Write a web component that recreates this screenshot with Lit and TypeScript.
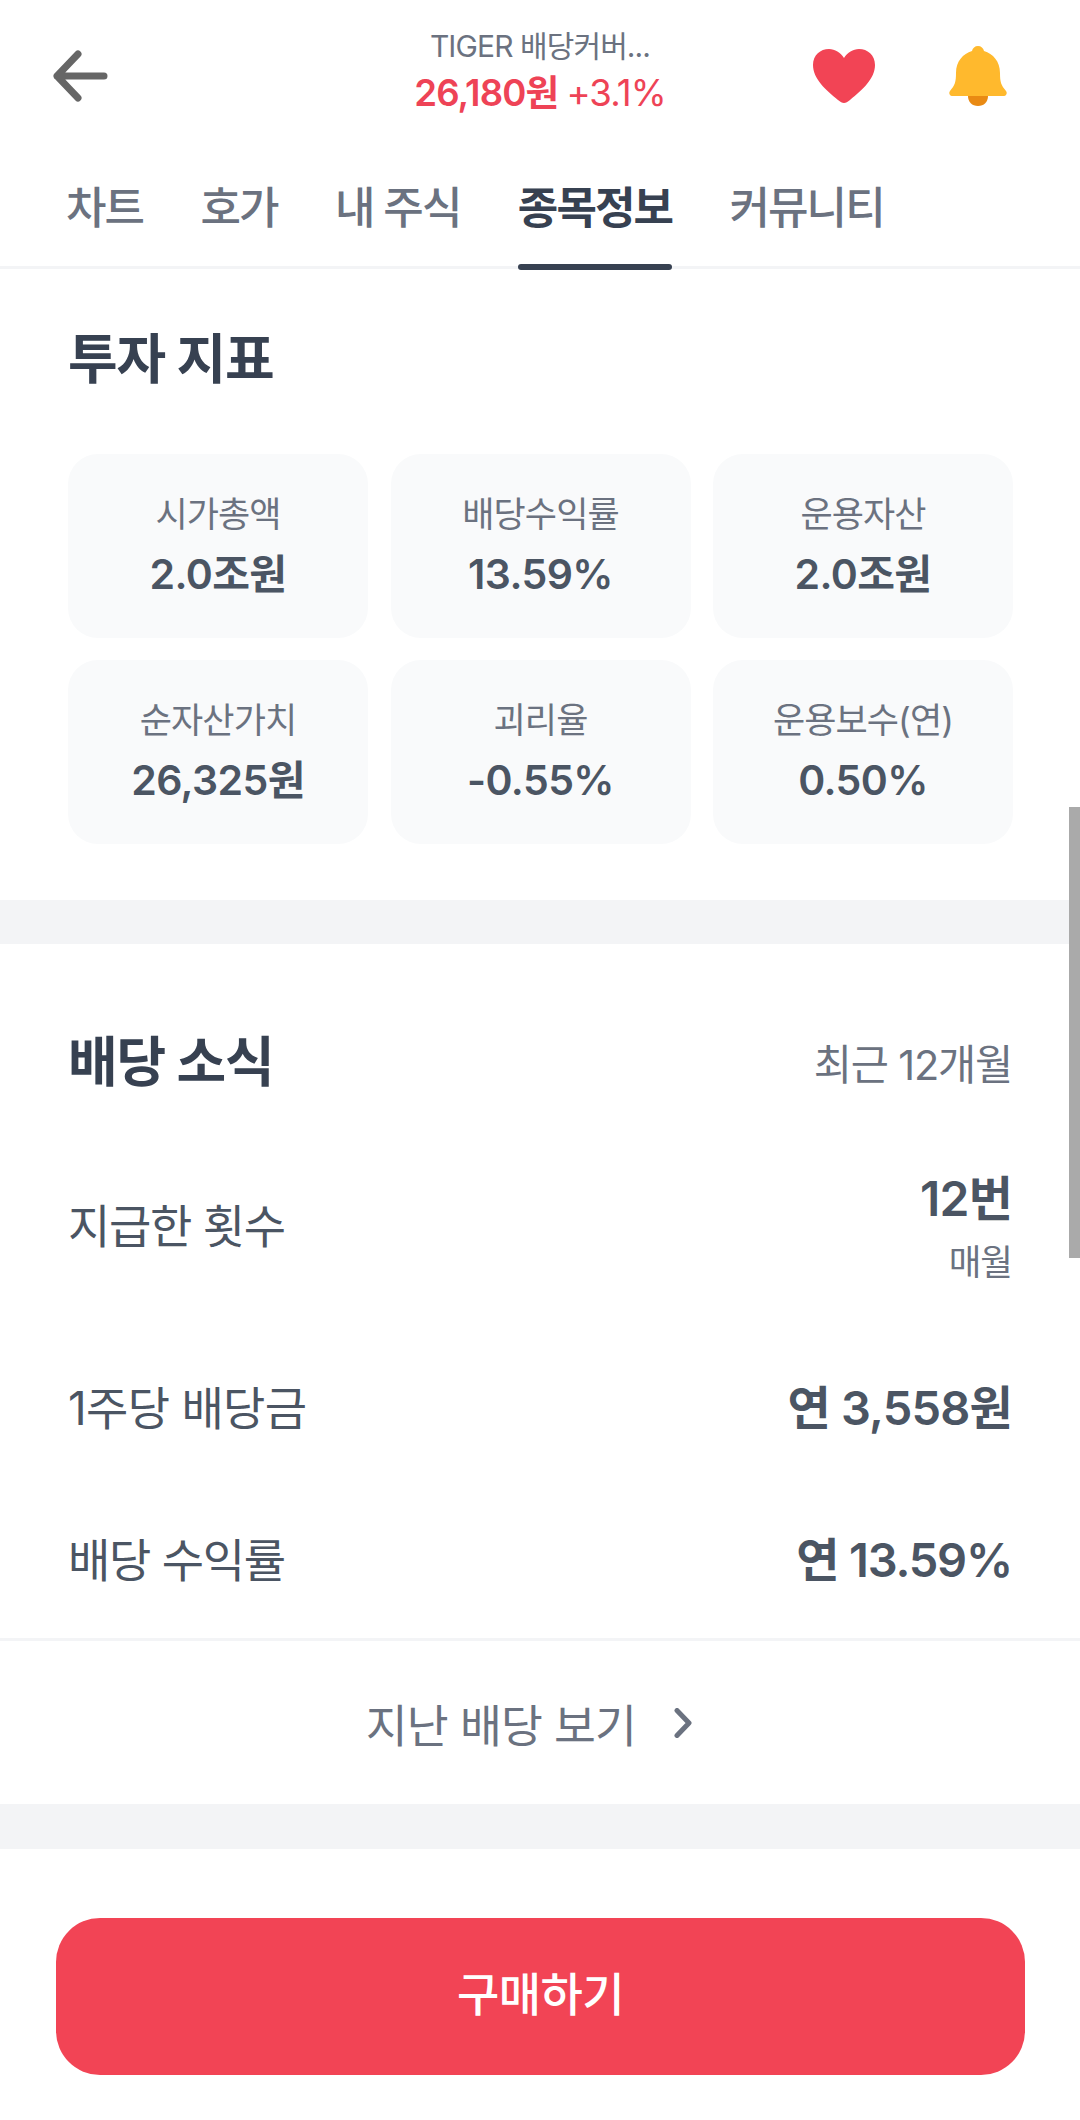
import { LitElement, html, css } from "lit";
import { customElement } from "lit/decorators.js";

const cards = [
  ["시가총액", "2.0조원"],
  ["배당수익률", "13.59%"],
  ["운용자산", "2.0조원"],
  ["순자산가치", "26,325원"],
  ["괴리율", "-0.55%"],
  ["운용보수(연)", "0.50%"],
];

@customElement("app-root")
export class AppRoot extends LitElement {
  static styles = css`
    :host {
      display: block;
      position: relative;
      width: 1080px;
      height: 2120px;
      overflow: hidden;
      background: #fff;
      font-family: "Inter", "Noto Sans CJK KR", sans-serif;
      color: #4b5563;
    }
    * { box-sizing: border-box; }
    .header {
      height: 132px;
      padding: 20px 73px 0 73px;
      display: grid;
      grid-template-columns: 1fr auto 1fr;
      align-items: center;
    }
    .header svg { display: block; }
    .back { margin-left: -23px; }
    .icons { display: flex; justify-content: flex-end; align-items: center; gap: 73px; }
    .name { text-align: center; font-size: 30px; line-height: 40px; color: #6b7280; letter-spacing: -0.9px; }
    .price { text-align: center; font-size: 36.6px; line-height: 48px; margin-top: 3px; color: #ee4356; font-weight: 600; letter-spacing: -0.9px; }
    .price span { font-weight: 400; }
    .titlebox { align-self: start; padding-top: 6px; }
    .tabs {
      height: 137px;
      margin-bottom: -1px;
      padding: 0 66px;
      display: flex;
      gap: 57.300px;
      border-bottom: 3px solid #f3f4f6;
    }
    .tab {
      position: relative;
      height: 137px;
      font-size: 44px;
      line-height: 152px;
      font-weight: 500;
      color: #6b7280;
      letter-spacing: -1.9px;
    }
    .tab.on { color: #374151; font-weight: 700; }
    .tab.on::after {
      content: "";
      position: absolute;
      left: 0; right: 0; bottom: -1px;
      height: 6px;
      border-radius: 3px;
      background: #374151;
    }
    .sec1 { padding: 0 68px; height: 632px; }
    h2 { margin: 0; font-size: 54px; font-weight: 700; color: #374151; letter-spacing: -1.2px; }
    .sec1 h2 { line-height: 68px; padding-top: 58px; height: 186px; }
    .grid { display: grid; grid-template-columns: repeat(3, 300px); gap: 22px 22.5px; }
    .card {
      height: 184px;
      background: #f9fafb;
      border-radius: 30px;
      text-align: center;
      padding-top: 36px;
    }
    .card .k { font-size: 35px; line-height: 48px; color: #6b7280; letter-spacing: -0.9px; }
    .card .v { font-size: 41px; line-height: 54px; margin-top: 9px; font-weight: 600; color: #4b5563; letter-spacing: -0.6px; }
    .band { height: 45px; background: #f3f4f6; }
    .band.one { height: 44px; }
    .sec2 { height: 694px; padding: 84px 68px 0; }
    .head { display: flex; justify-content: space-between; align-items: center; height: 70px; }
    .head h2 { line-height: 68px; }
    .head .side { font-size: 41.500px; color: #6b7280; letter-spacing: -1.2px; margin-top: -2px; }
    .row { display: flex; justify-content: space-between; align-items: center; font-size: 46px; color: #4b5563; letter-spacing: -1.3px; }
    .row .l { line-height: 60px; }
    .row .r { font-weight: 600; font-size: 47px; text-align: right; line-height: 60px; letter-spacing: -0.8px; }
    .row.a { height: 136px; margin-top: 60px; }
    .row.a .r { font-size: 48px; padding-top: 14px; }
    .row.b { height: 60px; margin-top: 84px; letter-spacing: -0.7px; }
    .row.c { height: 60px; margin-top: 92px; }
    .row.c .r { letter-spacing: -1.2px; }
    .sub { font-size: 35.5px; font-weight: 400; color: #6b7280; line-height: 68px; letter-spacing: -1px; }
    .line { height: 3px; background: #f3f4f6; }
    .more {
      height: 163px;
      display: flex;
      justify-content: center;
      align-items: center;
      gap: 38px;
      font-size: 45.5px;
      color: #6b7280;
      letter-spacing: -0.8px;
      padding-right: 22px;
    }
    .foot { height: 271px; padding: 69px 55px 0 56px; }
    .buy {
      height: 157px;
      padding-bottom: 12px;
      border-radius: 44px;
      background: #f24455;
      color: #fff;
      font-size: 46px;
      font-weight: 500;
      letter-spacing: -0.6px;
      display: flex;
      align-items: center;
      justify-content: center;
    }
    .thumb { position: absolute; right: 0; top: 807px; width: 11px; height: 451px; background: #aaa; }
  `;

  render() {
    return html`
      <div class="header">
        <svg class="back" width="64" height="60" viewBox="0 0 64 60">
          <path d="M7 30H54M28 8L7 30L28 52" fill="none" stroke="#666" stroke-width="7" stroke-linecap="round" stroke-linejoin="round"/>
        </svg>
        <div class="titlebox">
          <div class="name">TIGER 배당커버...</div>
          <div class="price">26,180원 <span>+3.1%</span></div>
        </div>
        <div class="icons">
          <svg width="64" height="56" viewBox="0 0 64 56">
            <path d="M32 55C30 55 28.500 54 26 52C14 42 1 31 1 17C1 7 8.500 1 17 1C23 1 28.500 4.500 32 10C35.500 4.500 41 1 47 1C55.500 1 63 7 63 17C63 31 50 42 38 52C35.500 54 34 55 32 55Z" fill="#f24455"/>
          </svg>
          <svg width="58" height="60" viewBox="0 0 58 60">
            <path d="M19 50H39C39 56 35 60 29 60C23 60 19 56 19 50Z" fill="#e98a13"/>
            <path d="M29 0C32 0 34.500 2 35 5C44 8 51 15 51 27C51 36 52 39 57 45C58.500 47 57.500 50 55 50H3C0.500 50 -0.500 47 1 45C6 39 7 36 7 27C7 15 14 8 23 5C23.500 2 26 0 29 0Z" fill="#ffb92d"/>
          </svg>
        </div>
      </div>
      <div class="tabs">
        <div class="tab">차트</div>
        <div class="tab">호가</div>
        <div class="tab">내 주식</div>
        <div class="tab on">종목정보</div>
        <div class="tab">커뮤니티</div>
      </div>
      <div class="sec1">
        <h2>투자 지표</h2>
        <div class="grid">
          ${cards.map(([k, v]) => html`<div class="card"><div class="k">${k}</div><div class="v">${v}</div></div>`)}
        </div>
      </div>
      <div class="band one"></div>
      <div class="sec2">
        <div class="head"><h2>배당 소식</h2><span class="side">최근 12개월</span></div>
        <div class="row a"><span class="l">지급한 횟수</span><div class="r">12번<div class="sub">매월</div></div></div>
        <div class="row b"><span class="l">1주당 배당금</span><span class="r">연 3,558원</span></div>
        <div class="row c"><span class="l">배당 수익률</span><span class="r">연 13.59%</span></div>
      </div>
      <div class="line"></div>
      <div class="more">
        <span>지난 배당 보기</span>
        <svg width="18" height="30" viewBox="0 0 18 30"><path d="M3 2.500L15 15L3 27.500" fill="none" stroke="#6b7280" stroke-width="5" stroke-linecap="round" stroke-linejoin="round"/></svg>
      </div>
      <div class="band"></div>
      <div class="foot"><div class="buy">구매하기</div></div>
      <div class="thumb"></div>
    `;
  }
}
